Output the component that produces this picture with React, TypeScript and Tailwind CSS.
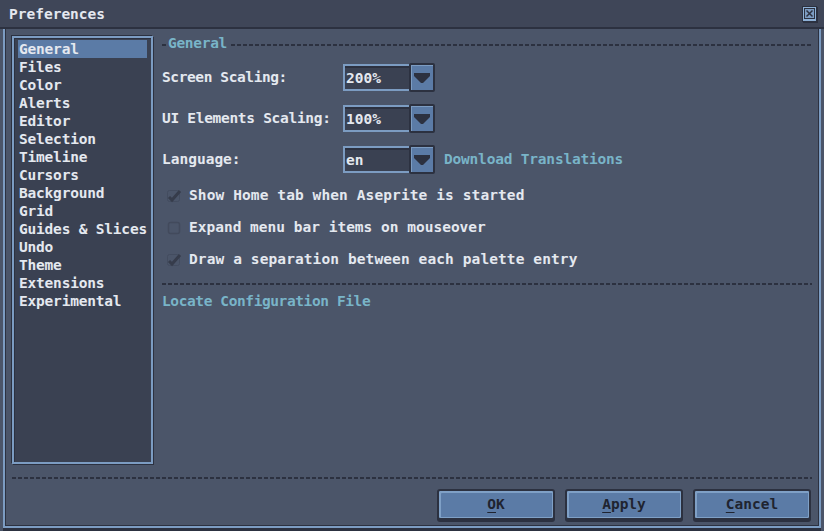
const items = [
  "General",
  "Files",
  "Color",
  "Alerts",
  "Editor",
  "Selection",
  "Timeline",
  "Cursors",
  "Background",
  "Grid",
  "Guides & Slices",
  "Undo",
  "Theme",
  "Extensions",
  "Experimental",
];

const font = { fontFamily: '"DejaVu Sans Mono", "Liberation Mono", monospace' };

function Dashed({ className = "" }: { className?: string }) {
  return (
    <div
      className={
        "h-[2px] bg-[repeating-linear-gradient(90deg,#2c3140_0_4px,transparent_4px_6px)] " +
        className
      }
    />
  );
}

function Combo({ value }: { value: string }) {
  return (
    <div className="flex h-[29px] w-[92px]">
      <div className="mt-[1px] h-[27px] w-[66px] border-2 border-r-0 border-[#7c9cc2] bg-[#3a4152] shadow-[inset_0_2px_0_#2c3140] pl-[1px] text-[#e4e8ef] leading-[24px]">
        {value}
      </div>
      <div className="flex h-[29px] w-[26px] items-center justify-center rounded-[2px] border-2 border-[#2c3140] bg-[#5b7ba6] shadow-[inset_1px_1px_0_#7c9cc2]">
        <svg width="18" height="12" viewBox="0 0 18 12">
          <polygon points="1,1 17,1 17,4 10,11 8,11 1,4" fill="#2c3140" />
        </svg>
      </div>
    </div>
  );
}

function Check({ on }: { on: boolean }) {
  return (
    <svg width="16" height="16" viewBox="0 0 16 16" className="shrink-0">
      {on ? (
        <>
          <rect x="1.5" y="2.5" width="12" height="11" rx="2" fill="none" stroke="#434c5f" />
          <path d="M3 9 L6 12 L14 3" fill="none" stroke="#363c4b" strokeWidth="3" />
        </>
      ) : (
        <rect x="2.5" y="2.5" width="11" height="11" rx="2" fill="none" stroke="#424a5c" strokeWidth="1.5" />
      )}
    </svg>
  );
}

function Btn({ first, rest }: { first: string; rest: string }) {
  return (
    <div className="flex h-[31px] w-[118px] items-center justify-center rounded-[3px] border-2 border-[#2c3140] bg-[#5b7ba6] text-[#1f2430] shadow-[inset_2px_2px_0_#7fa0c6,inset_-1px_-1px_0_#7fa0c6,0_2px_0_#2c3140]">
      <span>
        <u className="underline-offset-[3px]">{first}</u>
        {rest}
      </span>
    </div>
  );
}

export default function App() {
  return (
    <div
      className="flex h-[531px] w-[824px] flex-col overflow-hidden bg-[#4b5569] text-[14.5px] font-bold text-[#e4e8ef]"
      style={font}
    >
      <div className="flex h-[27px] shrink-0 items-center justify-between bg-[#3f4658] pl-[9px] pr-[7px]">
        <span className="mt-[2px]">Preferences</span>
        <div className="flex h-[16px] w-[15px] items-center justify-center border border-[#2c3140] bg-[#8db0d6] shadow-[1px_1px_0_#2c3140]">
          <svg width="11" height="11" viewBox="0 0 11 11">
            <rect x="0.5" y="0.5" width="10" height="10" fill="#7c9cc2" stroke="#2c3140" />
            <path d="M2.5 2.5 L8.5 8.5 M8.5 2.5 L2.5 8.5" stroke="#2c3140" strokeWidth="1.5" />
          </svg>
        </div>
      </div>
      <div className="h-[2px] shrink-0 bg-[#2c3140]" />
      <div className="mx-[3px] mb-[3px] flex flex-1 flex-col border-2 border-t-0 border-[#7c9cc2] shadow-[inset_1px_0_0_#2c3140,inset_-1px_0_0_#2c3140,inset_0_-1px_0_#2c3140,0_3px_0_#2c3140] px-[7px] pt-[7px]">
        <div className="flex h-[428px]">
          <div className="h-[428px] w-[141px] shrink-0 border-2 border-[#7c9cc2] bg-[#3a4152] shadow-[-1px_-1px_0_#2c3140,1px_1px_0_#2c3140,inset_1px_1px_0_#2c3140] px-[4px] pt-[2px]">
            {items.map((it, i) => (
              <div
                key={it}
                className={
                  "h-[18px] whitespace-nowrap pl-[1px] leading-[18px] tracking-[-0.2px] " +
                  (i === 0 ? "bg-[#5b7ba6]" : "")
                }
              >
                {it}
              </div>
            ))}
          </div>
          <div className="ml-[9px] flex flex-1 flex-col">
            <div className="mt-[1px] flex h-[14px] items-center">
              <div className="mt-[2px] h-[2px] w-[4px] bg-[#2c3140]" />
              <span className="ml-[2px] text-[#79b4c8] tracking-[-0.3px]">General</span>
              <Dashed className="ml-[4px] flex-1 mt-[2px]" />
            </div>
            <div className="mt-[12px] flex h-[29px] items-center">
              <span className="w-[181px] tracking-[-0.4px]">Screen Scaling:</span>
              <Combo value="200%" />
            </div>
            <div className="mt-[12px] flex h-[29px] items-center">
              <span className="w-[181px] tracking-[-0.3px]">UI Elements Scaling:</span>
              <Combo value="100%" />
            </div>
            <div className="mt-[12px] flex h-[29px] items-center">
              <span className="w-[181px]">Language:</span>
              <Combo value="en" />
              <span className="ml-[9px] text-[#79b4c8] tracking-[-0.2px]">Download Translations</span>
            </div>
            <div className="mt-[6px] flex h-[32px] items-center gap-[7px] pl-[4px]">
              <Check on />
              <span className="tracking-[0.1px]">Show Home tab when Aseprite is started</span>
            </div>
            <div className="flex h-[32px] items-center gap-[7px] pl-[4px]">
              <Check on={false} />
              <span>Expand menu bar items on mouseover</span>
            </div>
            <div className="flex h-[32px] items-center gap-[7px] pl-[4px]">
              <Check on />
              <span className="tracking-[0.1px]">Draw a separation between each palette entry</span>
            </div>
            <Dashed className="mt-[7px]" />
            <div className="mt-[7px] h-[18px] leading-[18px] text-[#79b4c8] tracking-[-0.4px]">
              Locate Configuration File
            </div>
          </div>
        </div>
        <Dashed className="mt-[13px]" />
        <div className="mt-[10px] flex justify-end gap-[10px] pr-[1px]">
          <Btn first="O" rest="K" />
          <Btn first="A" rest="pply" />
          <Btn first="C" rest="ancel" />
        </div>
      </div>
    </div>
  );
}
